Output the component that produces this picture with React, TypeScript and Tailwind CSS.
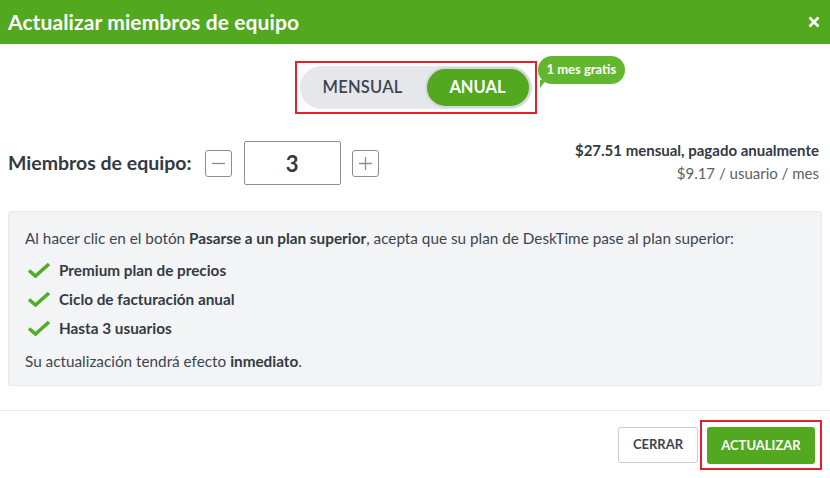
import React from "react";

function Check() {
  return (
    <svg width="24" height="16" viewBox="0 0 24 16" className="shrink-0">
      <path d="M2 8.5 L8.5 14 L22 2" fill="none" stroke="#4fae26" strokeWidth="3.6" strokeLinecap="butt" strokeLinejoin="miter" />
    </svg>
  );
}

export default function App() {
  return (
    <div className="w-[830px] h-[478px] bg-white text-[#333a44] font-['Lato',sans-serif]">
      <div className="h-[44px] bg-[#52a81e] flex items-center justify-between pl-2 pr-[10px]">
        <h1 className="text-white text-[21px] font-bold tracking-[0.1px]">Actualizar miembros de equipo</h1>
        <svg width="12" height="12" viewBox="0 0 12 12">
          <path d="M1.5 1.5 L10.5 10.5 M10.5 1.5 L1.5 10.5" stroke="white" strokeWidth="2.6" />
        </svg>
      </div>

      <div className="pt-[17px] flex justify-center">
        <div className="relative ml-[1px]">
          <div className="w-[242px] h-[53px] border-2 border-[#e3212d] p-[3px]">
            <div className="h-[43px] rounded-full bg-[#e5e7eb] flex items-center p-[1px]">
              <div className="flex-1 text-center text-[16.5px] font-semibold text-[#3d4450] tracking-[0.2px]">MENSUAL</div>
              <div className="w-[106px] h-[41px] rounded-full bg-[#52a81e] border-2 border-[#d4d7dc] flex items-center justify-center text-white text-[16.5px] font-bold">ANUAL</div>
            </div>
          </div>
          <div className="absolute left-[calc(100%+1px)] top-[-5px]">
            <div className="relative h-[28px] px-[9px] rounded-[14px] bg-[#62b72f] text-white text-[13px] font-bold flex items-center whitespace-nowrap">
              1 mes gratis
              <div className="absolute left-[2px] bottom-[-4px] w-0 h-0 border-l-[6px] border-l-[#62b72f] border-b-[8px] border-b-transparent"></div>
            </div>
          </div>
        </div>
      </div>

      <div className="mt-[27px] pl-2 pr-[11px] flex items-center justify-between">
        <div className="flex items-center">
          <span className="text-[19.5px] font-bold mr-[13px]">Miembros de equipo:</span>
          <button className="w-[27px] h-[27px] border border-[#8a8f96] rounded-[3px] flex items-center justify-center">
            <svg width="15" height="15" viewBox="0 0 15 15"><path d="M1 7.5 H14" stroke="#8a8f96" strokeWidth="1.3" /></svg>
          </button>
          <div className="ml-[12px] w-[97px] h-[44px] border border-[#8a8f96] rounded-[2px] flex items-center justify-center text-[22px] font-bold">3</div>
          <button className="ml-[11px] w-[27px] h-[27px] border border-[#8a8f96] rounded-[3px] flex items-center justify-center">
            <svg width="15" height="15" viewBox="0 0 15 15"><path d="M1 7.5 H14 M7.5 1 V14" stroke="#8a8f96" strokeWidth="1.3" /></svg>
          </button>
        </div>
        <div className="text-right text-[15px] leading-[23px] -mt-[2px]">
          <div className="font-bold">$27.51 mensual, pagado anualmente</div>
          <div className="text-[#5b616a]">$9.17 / usuario / mes</div>
        </div>
      </div>

      <div className="mt-[26px] mx-2 h-[175px] bg-[#f3f4f6] border border-[#e7e9ec] rounded-[3px] pl-[16px] pt-[15px] text-[15.3px] text-[#3d4450]">
        <p className="leading-[22px]">
          Al hacer clic en el botón <b className="text-[#333a44]">Pasarse a un plan superior</b>, acepta que su plan de DeskTime pase al plan superior:
        </p>
        <ul className="mt-[10px] flex flex-col gap-[7px] font-bold text-[#333a44]">
          <li className="flex items-center gap-[8px] h-[22px] pl-[2px]"><Check />Premium plan de precios</li>
          <li className="flex items-center gap-[8px] h-[22px] pl-[2px]"><Check />Ciclo de facturación anual</li>
          <li className="flex items-center gap-[8px] h-[22px] pl-[2px]"><Check />Hasta 3 usuarios</li>
        </ul>
        <p className="mt-[11px] leading-[22px]">
          Su actualización tendrá efecto <b className="text-[#333a44]">inmediato</b>.
        </p>
      </div>

      <div className="mt-[24px] border-t border-[#e5e7eb] flex justify-end items-center pt-[9px] pr-2 gap-[2px]">
        <button className="w-[80px] h-[36px] border border-[#c9ccd1] rounded-[3px] bg-white text-[13px] font-bold text-[#3d4450]">CERRAR</button>
        <div className="border-2 border-[#e3212d] px-[5px] pt-[5px] pb-[4px]">
          <button className="w-[108px] h-[37px] rounded-[3px] bg-[#52a81e] text-white text-[13px] font-bold">ACTUALIZAR</button>
        </div>
      </div>
    </div>
  );
}
